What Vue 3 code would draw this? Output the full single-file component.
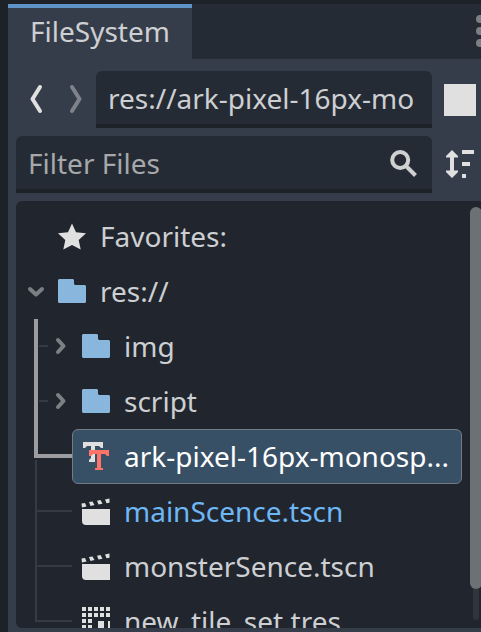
<script setup>
const rows = [
  { label: 'Favorites:', icon: 'star', top: true },
  { label: 'res://', icon: 'folder', top: true, arrow: 'down' },
  { label: 'img', icon: 'folder', arrow: 'right', guide: 'trail' },
  { label: 'script', icon: 'folder', arrow: 'right', guide: 'trail' },
  { label: 'ark-pixel-16px-monosp...', icon: 'font', guide: 'turn', selected: true },
  { label: 'mainScence.tscn', icon: 'scene', guide: 'branch', main: true },
  { label: 'monsterSence.tscn', icon: 'scene', guide: 'branch' },
  { label: 'new_tile_set.tres', icon: 'tiles', guide: 'last' },
]
</script>

<template>
  <div class="dock">
    <header class="tabs">
      <div class="tab">FileSystem</div>
      <svg class="dots" width="5" height="34" viewBox="0 0 5 34">
        <circle cx="4" cy="4" r="4" /><circle cx="4" cy="16" r="4" /><circle cx="4" cy="28" r="4" />
      </svg>
    </header>
    <main class="panel">
      <div class="bar">
        <svg class="history" width="80" height="57" viewBox="0 0 80 57">
          <path d="M24 16L16.500 28L24 40" stroke="#e0e0e0" />
          <path d="M56 16L63.500 28L56 40" stroke="#7f828a" />
        </svg>
        <div class="field path"><span>res://ark-pixel-16px-mo</span></div>
        <i class="split"></i>
      </div>
      <div class="bar">
        <div class="field filter">
          <span>Filter Files</span>
          <svg width="28" height="28" viewBox="0 0 28 28" fill="none" stroke="#cfd0d1">
            <circle cx="10.200" cy="10" r="8" stroke-width="4" />
            <path d="M16 16L25.500 25.500" stroke-width="4" />
          </svg>
        </div>
        <svg class="sort" width="30" height="31" viewBox="0 0 30 31" fill="#e0e0e0">
          <path d="M6 1L12 7V8.500H8V21.500H12V23L6 29L0 23V21.500H4V8.500H0V7Z" />
          <path d="M16 1H28V5H16ZM16 13H24V17H16ZM16 25H20V29H16Z" />
        </svg>
      </div>
      <div class="tree">
        <div class="rows">
          <div v-for="row in rows" :key="row.label" class="row">
            <svg class="guide" :width="row.top ? 32 : 56" height="55" :viewBox="row.top ? '0 0 32 55' : '0 0 56 55'">
              <g v-if="row.guide === 'trail'">
                <path class="lit" d="M20 0V55" /><path class="dim" d="M23 27H32" />
              </g>
              <g v-else-if="row.guide === 'turn'">
                <path class="lit" d="M20 0V27H56" /><path class="dim" d="M20 31V55" />
              </g>
              <path v-else-if="row.guide === 'branch'" class="dim" d="M20 0V55M20 27H56" />
              <path v-else-if="row.guide === 'last'" class="dim" d="M20 0V27H56" />
              <path v-if="row.arrow === 'down'" class="arrow" d="M14 25L20 30.500L26 25" />
              <path v-if="row.arrow === 'right'" class="arrow" d="M42 21L47.500 27L42 33" />
            </svg>
            <div class="item" :class="{ selected: row.selected, main: row.main }">
              <svg class="icon" width="32" height="32" viewBox="0 0 32 32">
                <path v-if="row.icon === 'star'" fill="#e0e0e0" d="M16 2.500L20 11.300L30 12.300L22.700 19L24.700 28.500L16 24L7.300 28.500L9.300 19L2 12.300L12 11.300Z" />
                <path v-else-if="row.icon === 'folder'" fill="#88b6dd" d="M3 3H17L18 4V8L19 9H29L30 10V26L29 27H3L2 26V4Z" />
                <g v-else-if="row.icon === 'font'">
                  <path fill="#e0e0e0" d="M3 1H23V7H21L19 5H15V21H9V19L11 17V5H7L5 7H3Z" />
                  <path fill="#ff7468" d="M9 9H29V15H27L25 13H21V27H23V29H15V27H17V13H13L11 15H9Z" />
                </g>
                <g v-else-if="row.icon === 'scene'" fill="#e0e0e0">
                  <path d="M2 13H30V29H6Q2 29 2 25Z" />
                  <path d="M1.500 7.500L5 7L6.500 10.500L2 11.500ZM9 6L12.500 5.500L14.500 9L10.500 10ZM17 4.800L20.500 4L22.500 7.700L18.500 8.500ZM25 3.500L29.500 2.500V6.800L26.500 7.300Z" />
                </g>
                <path v-else fill="#e0e0e0" d="M2 1h4v4h-4zM8 1h4v4h-4zM14 1h4v4h-4zM20 1h4v4h-4zM26 1h4v4h-4zM2 7h4v4h-4zM8 7h4v4h-4zM14 7h4v4h-4zM20 7h4v4h-4zM26 7h4v4h-4zM2 13h4v4h-4zM8 13h4v4h-4zM2 19h4v4h-4zM8 19h4v4h-4zM18 15h6v8h-6zM28 15h2v8h-2z" />
              </svg>
              <span>{{ row.label }}</span>
            </div>
          </div>
        </div>
        <div class="scroll"><div class="grabber"></div><div class="track"></div></div>
      </div>
    </main>
  </div>
</template>

<style>
body { margin: 0; overflow: hidden; background: #1d2229; }
</style>

<style scoped>
.dock {
  box-sizing: border-box;
  width: 481px;
  height: 632px;
  padding: 4px 0 0 8px;
  overflow: hidden;
  background: #1d2229;
  color: #cdcfd2;
  font: 28px/38px "Noto Sans", sans-serif;
  white-space: nowrap;
}
svg { display: block; flex: none; }
.tabs { display: flex; justify-content: space-between; height: 55px; background: #252b34; }
.tab {
  box-sizing: border-box;
  width: 184px;
  padding: 4px 0 0 22px;
  border-top: 4px solid #5d93c7;
  background: #363d4a;
}
.dots { margin-top: 11px; overflow: hidden; fill: #7c8085; }
.panel {
  box-sizing: border-box;
  display: flex;
  flex-direction: column;
  gap: 8px;
  height: 573px;
  padding: 12px 0 4px 8px;
  background: #363d4a;
}
.bar { display: flex; align-items: center; height: 57px; flex: none; }
.history { fill: none; stroke-width: 4; stroke-linecap: round; stroke-linejoin: round; }
.field {
  box-sizing: border-box;
  display: flex;
  justify-content: space-between;
  height: 57px;
  padding: 8px 14px 0 12px;
  border-radius: 6px 6px 0 0;
  background: linear-gradient(#252b34 53px, #1d2229 53px);
}
.path { width: 336px; }
.filter { width: 416px; color: #a6a8ab; }
.filter svg { margin-top: 6px; }
.split { width: 32px; height: 32px; margin-left: 12px; background: #e0e0e0; }
.sort { margin-left: 14px; }
.tree {
  box-sizing: border-box;
  display: flex;
  justify-content: space-between;
  height: 427px;
  padding-top: 8px;
  overflow: hidden;
  border-radius: 6px 0 0 6px;
  background: #21262e;
}
.rows { width: 446px; }
.row { display: flex; height: 55px; }
.guide { fill: none; }
.lit { stroke: #9d9ca1; stroke-width: 4; }
.dim { stroke: #363a42; stroke-width: 2; }
.arrow { stroke: #7c7f83; stroke-width: 4; stroke-linecap: round; stroke-linejoin: round; }
.item {
  box-sizing: border-box;
  display: flex;
  flex: 1;
  gap: 12px;
  padding: 7px;
  border: 1px solid transparent;
  border-radius: 6px;
}
.icon { margin-top: 4px; }
.selected { border-color: #737b86; background: #385066; color: #fff; }
.main { color: #6db7f5; }
.scroll { width: 11px; margin-top: -2px; }
.grabber { width: 12px; height: 382px; border-radius: 6px; background: #6d7176; }
.track { width: 6px; height: 31px; margin-left: 3px; border-radius: 0 0 3px 3px; background: #30343c; }
</style>
